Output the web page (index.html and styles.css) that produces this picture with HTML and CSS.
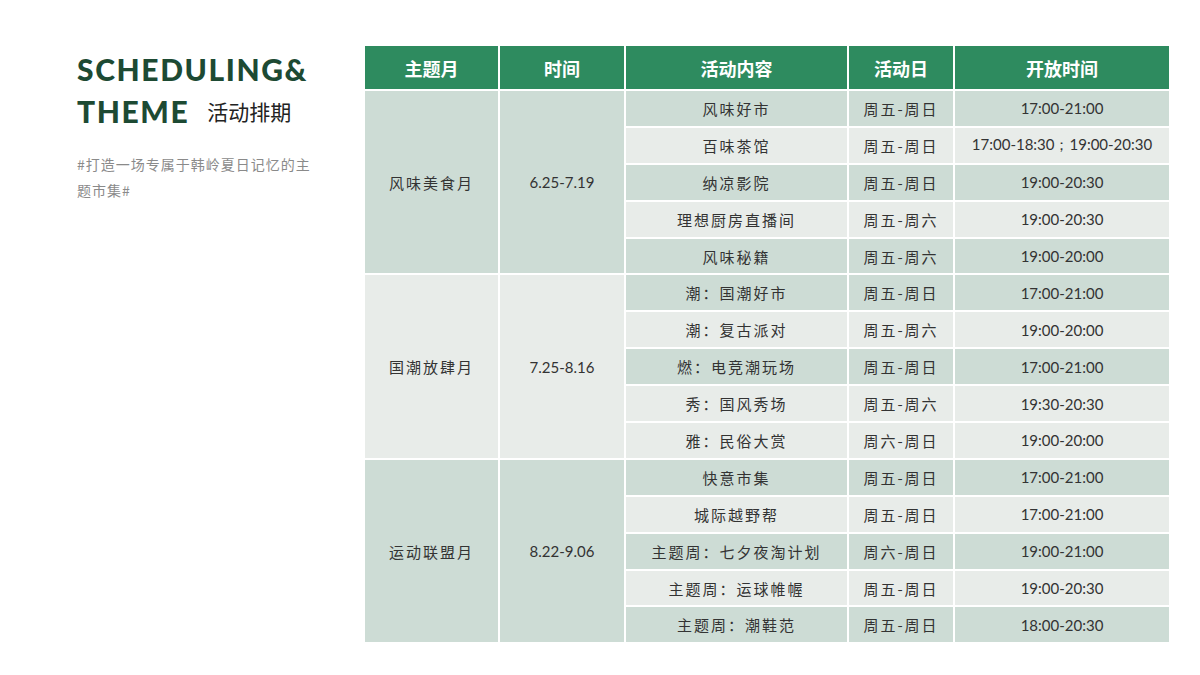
FILE: index.html
```html
<!DOCTYPE html>
<html lang="zh">
<head>
<meta charset="utf-8">
<link rel="stylesheet" href="styles.css">
</head>
<body>
<div class="page">
  <section class="intro">
    <h1 class="title"><span class="en">SCHEDULING&amp;</span><span class="line2"><span class="en">THEME</span><span class="cn">活动排期</span></span></h1>
    <p class="sub">#打造一场专属于韩岭夏日记忆的主题市集#</p>
  </section>
  <table class="sched">
    <thead>
      <tr><th class="c1">主题月</th><th class="c2">时间</th><th class="c3">活动内容</th><th class="c4">活动日</th><th class="c5">开放时间</th></tr>
    </thead>
    <tbody>
      <tr class="d"><td rowspan="5" class="grp d">风味美食月</td><td rowspan="5" class="num grp d">6.25-7.19</td><td>风味好市</td><td>周五-周日</td><td class="num">17:00-21:00</td></tr>
      <tr class="l"><td>百味茶馆</td><td>周五-周日</td><td class="num">17:00-18:30；19:00-20:30</td></tr>
      <tr class="d"><td>纳凉影院</td><td>周五-周日</td><td class="num">19:00-20:30</td></tr>
      <tr class="l"><td>理想厨房直播间</td><td>周五-周六</td><td class="num">19:00-20:30</td></tr>
      <tr class="d"><td>风味秘籍</td><td>周五-周六</td><td class="num">19:00-20:00</td></tr>
      <tr class="d"><td rowspan="5" class="grp l">国潮放肆月</td><td rowspan="5" class="num grp l">7.25-8.16</td><td>潮：国潮好市</td><td>周五-周日</td><td class="num">17:00-21:00</td></tr>
      <tr class="l"><td>潮：复古派对</td><td>周五-周六</td><td class="num">19:00-20:00</td></tr>
      <tr class="d"><td>燃：电竞潮玩场</td><td>周五-周日</td><td class="num">17:00-21:00</td></tr>
      <tr class="l"><td>秀：国风秀场</td><td>周五-周六</td><td class="num">19:30-20:30</td></tr>
      <tr class="l"><td>雅：民俗大赏</td><td>周六-周日</td><td class="num">19:00-20:00</td></tr>
      <tr class="d"><td rowspan="5" class="grp d">运动联盟月</td><td rowspan="5" class="num grp d">8.22-9.06</td><td>快意市集</td><td>周五-周日</td><td class="num">17:00-21:00</td></tr>
      <tr class="l"><td>城际越野帮</td><td>周五-周日</td><td class="num">17:00-21:00</td></tr>
      <tr class="d"><td>主题周：七夕夜淘计划</td><td>周六-周日</td><td class="num">19:00-21:00</td></tr>
      <tr class="l"><td>主题周：运球帷幄</td><td>周五-周日</td><td class="num">19:00-20:30</td></tr>
      <tr class="d"><td>主题周：潮鞋范</td><td>周五-周日</td><td class="num">18:00-20:30</td></tr>
    </tbody>
  </table>
</div>
</body>
</html>
```

FILE: styles.css
```css
* { box-sizing: border-box; }
html, body { margin: 0; padding: 0; background: #ffffff; }
body {
  width: 1200px;
  height: 675px;
  overflow: hidden;
  font-family: "Noto Sans CJK SC", "Noto Sans", sans-serif;
  color: #333;
}
.page {
  display: flex;
  align-items: flex-start;
  padding: 44px 0 0 77px;
}
.intro {
  width: 242px;
  padding-top: 4px;
}
.title {
  margin: 0;
  font-family: "Lato", "Noto Sans", sans-serif;
  font-weight: 900;
  color: #1d4a33;
  font-size: 30px;
  line-height: 42px;
  letter-spacing: 1.6px;
}
.title .en { display: inline-block; }
.line2 { display: flex; align-items: center; gap: 18px; }
.title .cn {
  font-family: "Noto Sans CJK SC", sans-serif;
  font-weight: 400;
  font-size: 21px;
  color: #222;
  letter-spacing: 0;
}
.sub {
  margin: 19px 0 0;
  font-size: 14px;
  line-height: 26px;
  color: #8a8a8a;
  letter-spacing: 1px;
  width: 242px;
}
.sched {
  margin-left: 44px;
  border-collapse: collapse;
  width: 806px;
  table-layout: fixed;
  font-size: 15px;
}
.sched th, .sched td {
  border: 2px solid #ffffff;
  text-align: center;
  padding: 0;
}
.sched th {
  background: #2e8b5f;
  color: #fff;
  font-weight: 700;
  font-size: 18px;
  height: 45px;
}
.c1 { width: 135px; }
.c2 { width: 126px; }
.c3 { width: 223px; }
.c4 { width: 106px; }
.c5 { width: 216px; }
.sched td {
  height: 36.9px;
  color: #333;
  letter-spacing: 2px;
}
tr.d td { background: #cddcd5; }
tr.l td { background: #e8ece9; }
.sched td.grp.d { background: #cddcd5; }
.sched td.grp.l { background: #e8ece9; }
.sched td.num {
  font-family: "Lato", "Open Sans", sans-serif;
  letter-spacing: 0;
  font-size: 15px;
}
```
